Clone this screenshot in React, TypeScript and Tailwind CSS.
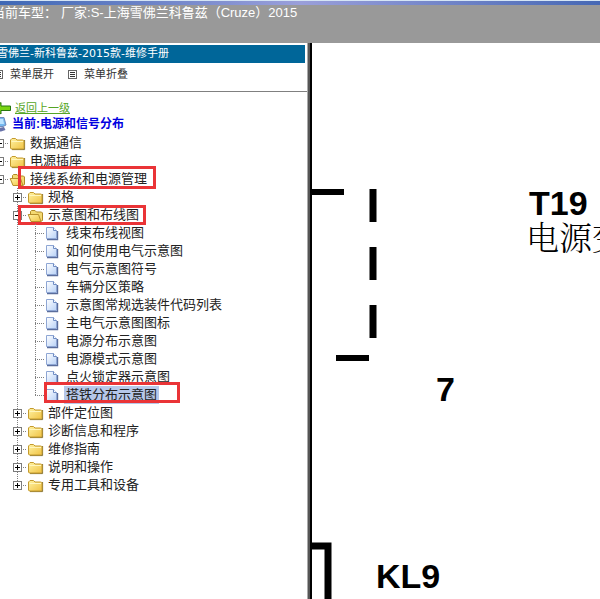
import React from "react";

type NodeKind = "closed" | "open" | "page";

interface TreeItem {
  label: string;
  level: number;
  kind: NodeKind;
  selected?: boolean;
  last?: boolean;
  mark?: string;
}

const items: TreeItem[] = [
  { label: "数据通信", level: 0, kind: "closed" },
  { label: "电源插座", level: 0, kind: "closed" },
  { label: "接线系统和电源管理", level: 0, kind: "open", mark: "left-[27px] -top-1 w-[138px] h-[23px]" },
  { label: "规格", level: 1, kind: "closed" },
  { label: "示意图和布线图", level: 1, kind: "open", mark: "left-[27px] -top-px w-[128px] h-5" },
  { label: "线束布线视图", level: 2, kind: "page" },
  { label: "如何使用电气示意图", level: 2, kind: "page" },
  { label: "电气示意图符号", level: 2, kind: "page" },
  { label: "车辆分区策略", level: 2, kind: "page" },
  { label: "示意图常规选装件代码列表", level: 2, kind: "page" },
  { label: "主电气示意图图标", level: 2, kind: "page" },
  { label: "电源分布示意图", level: 2, kind: "page" },
  { label: "电源模式示意图", level: 2, kind: "page" },
  { label: "点火锁定器示意图", level: 2, kind: "page" },
  { label: "搭铁分布示意图", level: 2, kind: "page", selected: true, last: true, mark: "left-[53px] -top-1 w-[136px] h-[21px]" },
  { label: "部件定位图", level: 1, kind: "closed" },
  { label: "诊断信息和程序", level: 1, kind: "closed" },
  { label: "维修指南", level: 1, kind: "closed" },
  { label: "说明和操作", level: 1, kind: "closed" },
  { label: "专用工具和设备", level: 1, kind: "closed", last: true },
];

const dots = { stroke: "#808080", strokeDasharray: "1 1" };

function Guide({ line, branch, last }: { line?: boolean; branch?: boolean; last?: boolean }) {
  return (
    <svg className="h-[18px] w-[18px] shrink-0" aria-hidden="true">
      {line && <path d={last ? "M8.5 0V10" : "M8.5 0V18"} {...dots} />}
      {branch && <path d="M8 9.5H18" {...dots} />}
    </svg>
  );
}

function Expander({ open, last }: { open: boolean; last?: boolean }) {
  return (
    <button type="button" aria-label={open ? "折叠" : "展开"} className="h-[18px] w-[18px] shrink-0">
      <svg className="block h-[18px] w-[18px]">
        <path d={last ? "M8.5 0V9" : "M8.5 0V18"} {...dots} />
        <path d="M14 9.5H18" {...dots} />
        <rect x="4.5" y="5.5" width="8" height="8" fill="#fff" stroke="#7b7b7b" />
        <path d={open ? "M6 9.5H11" : "M6 9.5H11M8.5 7V12"} stroke="#000" />
      </svg>
    </button>
  );
}

function NodeIcon({ kind }: { kind: NodeKind }) {
  if (kind === "page") {
    return (
      <svg className="h-[18px] w-[18px] shrink-0" aria-hidden="true">
        <path d="M12.5 7V15.5H2" fill="none" stroke="#5a6d9c" strokeWidth="1.4" />
        <path d="M1.5 3.5H8.5L11.5 6.5V14.5H1.5Z" fill="url(#paper)" stroke="#8ea6d4" />
        <path d="M8.5 3.5V6.5H11.5" fill="#fff" stroke="#6f8cc4" />
      </svg>
    );
  }
  return (
    <svg className="h-[18px] w-[18px] shrink-0" aria-hidden="true">
      {kind === "closed" ? (
        <>
          <path d="M15.6 6V15.6H3" fill="none" stroke="#86722f" />
          <path d="M1.5 14V6L3 4.5H6.5L8 6H13.5Q15 6 15 7.5V13.5Q15 15 13.5 15H3Q1.5 15 1.5 14Z" fill="url(#folder)" stroke="#c49a2d" />
          <path d="M2.5 7.5H14" stroke="#fff6bd" />
        </>
      ) : (
        <>
          <path d="M3.5 12V5.5L4.5 4.5H8L9.5 6H14.5L15.5 7V14.5L13.5 15.5Z" fill="#f3d972" stroke="#b18b28" />
          <path d="M1.2 8.5H11.5L14 15.5H4Z" fill="url(#folder)" stroke="#b8902b" />
        </>
      )}
    </svg>
  );
}

function TreeRow({ item }: { item: TreeItem }) {
  const { label, level, kind, selected, last, mark } = item;
  return (
    <li className="relative flex h-[18px] items-center">
      {level > 0 && <Guide />}
      {level > 1 && <Guide line />}
      {kind === "page" ? <Guide line branch last={last} /> : <Expander open={kind === "open"} last={last} />}
      <NodeIcon kind={kind} />
      <a
        href="#"
        className={`ml-px whitespace-nowrap px-0.5 text-[13px] leading-[18px] text-[#222] ${selected ? "bg-[#b6c8ea]" : ""}`}
      >
        {label}
      </a>
      {mark && <span className={`pointer-events-none absolute border-3 border-[#ea3437] ${mark}`} />}
    </li>
  );
}

function MenuIcon() {
  return (
    <svg className="h-[9px] w-[9px] shrink-0" aria-hidden="true">
      <rect x="0.5" y="0.5" width="8" height="8" fill="#fff" stroke="#666" />
      <path d="M2 2.5H7M2 4.5H7M2 6.5H7" stroke="#333" />
    </svg>
  );
}

function Sidebar() {
  return (
    <aside className="w-[307px] shrink-0 overflow-hidden bg-white pt-0.5">
      <h1 className="mr-0.5 -indent-[3px] whitespace-nowrap bg-[#006699] font-['DejaVu_Sans','Noto_Sans_CJK_SC',sans-serif] text-[11px] leading-[18px] text-white">
        雪佛兰-新科鲁兹-2015款-维修手册
      </h1>
      <div className="flex h-[29px] items-center border-b border-[#808080] pb-1.5 text-[11px] text-[#333]">
        <button type="button" className="-ml-1.5 flex items-center gap-[7px]">
          <MenuIcon />
          菜单展开
        </button>
        <button type="button" className="ml-[14px] flex items-center gap-[7px]">
          <MenuIcon />
          菜单折叠
        </button>
      </div>

      <div className="pt-2 text-[11px] leading-4">
        <a href="#" className="flex items-center gap-1 text-[#55a525] underline">
          <svg className="h-4 w-[11px] shrink-0" aria-hidden="true">
            <path d="M-6 8.5L1 2.5V6H10.5V10.5H1V14Z" fill="#79d413" stroke="#26770e" />
          </svg>
          返回上一级
        </a>
        <p className="flex items-center gap-[5px] text-[12px] font-bold text-[#0000e0]">
          <svg className="h-4 w-[7px] shrink-0" aria-hidden="true">
            <path d="M-6 1.5H4L6 9L3 10.5H-6Z" fill="#75b8ef" stroke="#718abb" />
            <path d="M0 3H3L4 8H0Z" fill="#bce3ff" />
            <path d="M-2 12L4 11L5.5 14L1 15.5H-3Z" fill="#6872a9" />
          </svg>
          当前:电源和信号分布
        </p>
      </div>

      <ul className="-ml-[9px] pb-4 pt-0.5">
        {items.map((item) => (
          <TreeRow key={item.label} item={item} />
        ))}
      </ul>
    </aside>
  );
}

function Diagram() {
  return (
    <main className="flex min-w-0 flex-1 border-l-2 border-black bg-white">
      <svg className="min-h-[556px] w-full" role="img" aria-label="电源分布示意图">
        <g stroke="#000" strokeWidth="6" fill="none">
          <path d="M0 149H32M24 315H57" />
          <path d="M61 146V179M61 204V237M61 262V295" strokeWidth="7" />
          <path d="M0 503H16V2000" strokeWidth="7" />
        </g>
        <g className="text-[34px] font-bold" fill="#000">
          <text x="217" y="172">T19</text>
          <text x="124" y="358">7</text>
          <text x="64" y="545">KL9</text>
        </g>
        <text x="214" y="207" className="font-['Noto_Serif_CJK_SC','Noto_Sans_CJK_SC',serif] text-[33px] font-light">
          电源变
        </text>
      </svg>
    </main>
  );
}

export default function App() {
  return (
    <div className="flex min-h-screen flex-col overflow-hidden bg-white font-['Liberation_Sans','Noto_Sans_CJK_SC',sans-serif]">
      <svg width="0" height="0" className="absolute" aria-hidden="true">
        <defs>
          <linearGradient id="folder" x1="0" y1="0" x2="1" y2="1">
            <stop offset="0" stopColor="#fff3a3" />
            <stop offset="1" stopColor="#f0c243" />
          </linearGradient>
          <linearGradient id="paper" x1="0" y1="0" x2="1" y2="1">
            <stop offset="0" stopColor="#ffffff" />
            <stop offset="1" stopColor="#b9d2f7" />
          </linearGradient>
        </defs>
      </svg>
      <div className="h-[5px] border-t border-[#d5e5f5] bg-linear-to-r from-[#3e68b5] via-[#9a9fda] to-[#4668b4]" />
      <header className="h-[38px] bg-[#999] text-[13px] leading-4 text-white">
        <p className="-ml-2 flex gap-1 whitespace-nowrap">
          <span>当前车型：</span>
          <span>厂家:S-上海雪佛兰科鲁兹（Cruze）2015</span>
        </p>
      </header>
      <div className="flex flex-1">
        <Sidebar />
        <div className="w-[3px] shrink-0 border-l border-[#aaa] bg-[#555]" />
        <Diagram />
      </div>
    </div>
  );
}
